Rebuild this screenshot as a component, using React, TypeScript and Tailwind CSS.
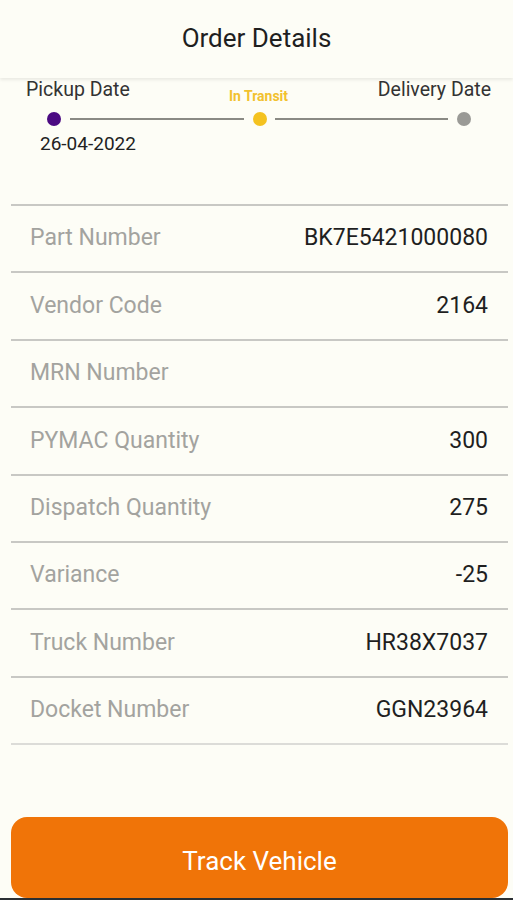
import React from "react";

const rows: [string, string][] = [
  ["Part Number", "BK7E5421000080"],
  ["Vendor Code", "2164"],
  ["MRN Number", ""],
  ["PYMAC Quantity", "300"],
  ["Dispatch Quantity", "275"],
  ["Variance", "-25"],
  ["Truck Number", "HR38X7037"],
  ["Docket Number", "GGN23964"],
];

export default function App() {
  return (
    <div
      className="w-[513px] h-[900px] bg-[#fdfdf6] flex flex-col overflow-hidden"
      style={{ fontFamily: "Roboto, 'Noto Sans', sans-serif" }}
    >
      <div className="h-[78px] shrink-0 flex items-center justify-center bg-[#fdfdf6] shadow-[0_2px_3px_rgba(0,0,0,0.08)] relative z-10">
        <span className="text-[26px] leading-[30px] text-[#1f1f1f] -mt-[3px]">Order Details</span>
      </div>

      <div className="pt-[1px]">
        <div className="grid grid-cols-[1fr_auto_1fr] items-end pl-[26px] pr-[22px] h-[22px]">
          <span className="justify-self-start text-[19.5px] leading-[22px] text-[#333]">Pickup Date</span>
          <span className="text-[14px] font-bold leading-[14px] text-[#f2c12e] -mb-[2px]">In Transit</span>
          <span className="justify-self-end text-[19.5px] leading-[22px] text-[#333]">Delivery Date</span>
        </div>
        <div className="flex items-center pl-[47px] pr-[42px] h-[14px] mt-[11px]">
          <div className="w-[14px] h-[14px] rounded-full bg-[#4b0a82] shrink-0" />
          <div className="flex-1 h-[2px] bg-[#8a8a84] mx-[9px]" />
          <div className="w-[14px] h-[14px] rounded-full bg-[#f4c21f] shrink-0" />
          <div className="flex-1 h-[2px] bg-[#8a8a84] ml-[8px] mr-[9px]" />
          <div className="w-[14px] h-[14px] rounded-full bg-[#9a9a96] shrink-0" />
        </div>
        <div className="pl-[40px] mt-[7px] text-[19px] leading-[22px] text-[#222]">26-04-2022</div>
      </div>

      <div className="ml-[11px] mr-[5px] mt-[49px] border-t-2 border-[#c8c8c4]">
        {rows.map(([k, v], i) => (
          <div
            key={k}
            className={`h-[67.4px] flex items-center justify-between pl-[19px] pr-[20px] border-b-2 ${
              i === rows.length - 1 ? "border-[#dcdcd8]" : "border-[#c8c8c4]"
            }`}
          >
            <span className="text-[23px] text-[#a3a39f]">{k}</span>
            <span className="text-[23px] text-[#1f1f1f]">{v}</span>
          </div>
        ))}
      </div>

      <div className="flex-1" />

      <div className="ml-[11px] mr-[5px] h-[81px] rounded-[16px] bg-[#f07408] flex items-center justify-center shrink-0">
        <span className="text-[26px] text-white mt-[8px]">Track Vehicle</span>
      </div>
      <div className="h-[2px] bg-[#2a2f33] shrink-0" />
    </div>
  );
}
